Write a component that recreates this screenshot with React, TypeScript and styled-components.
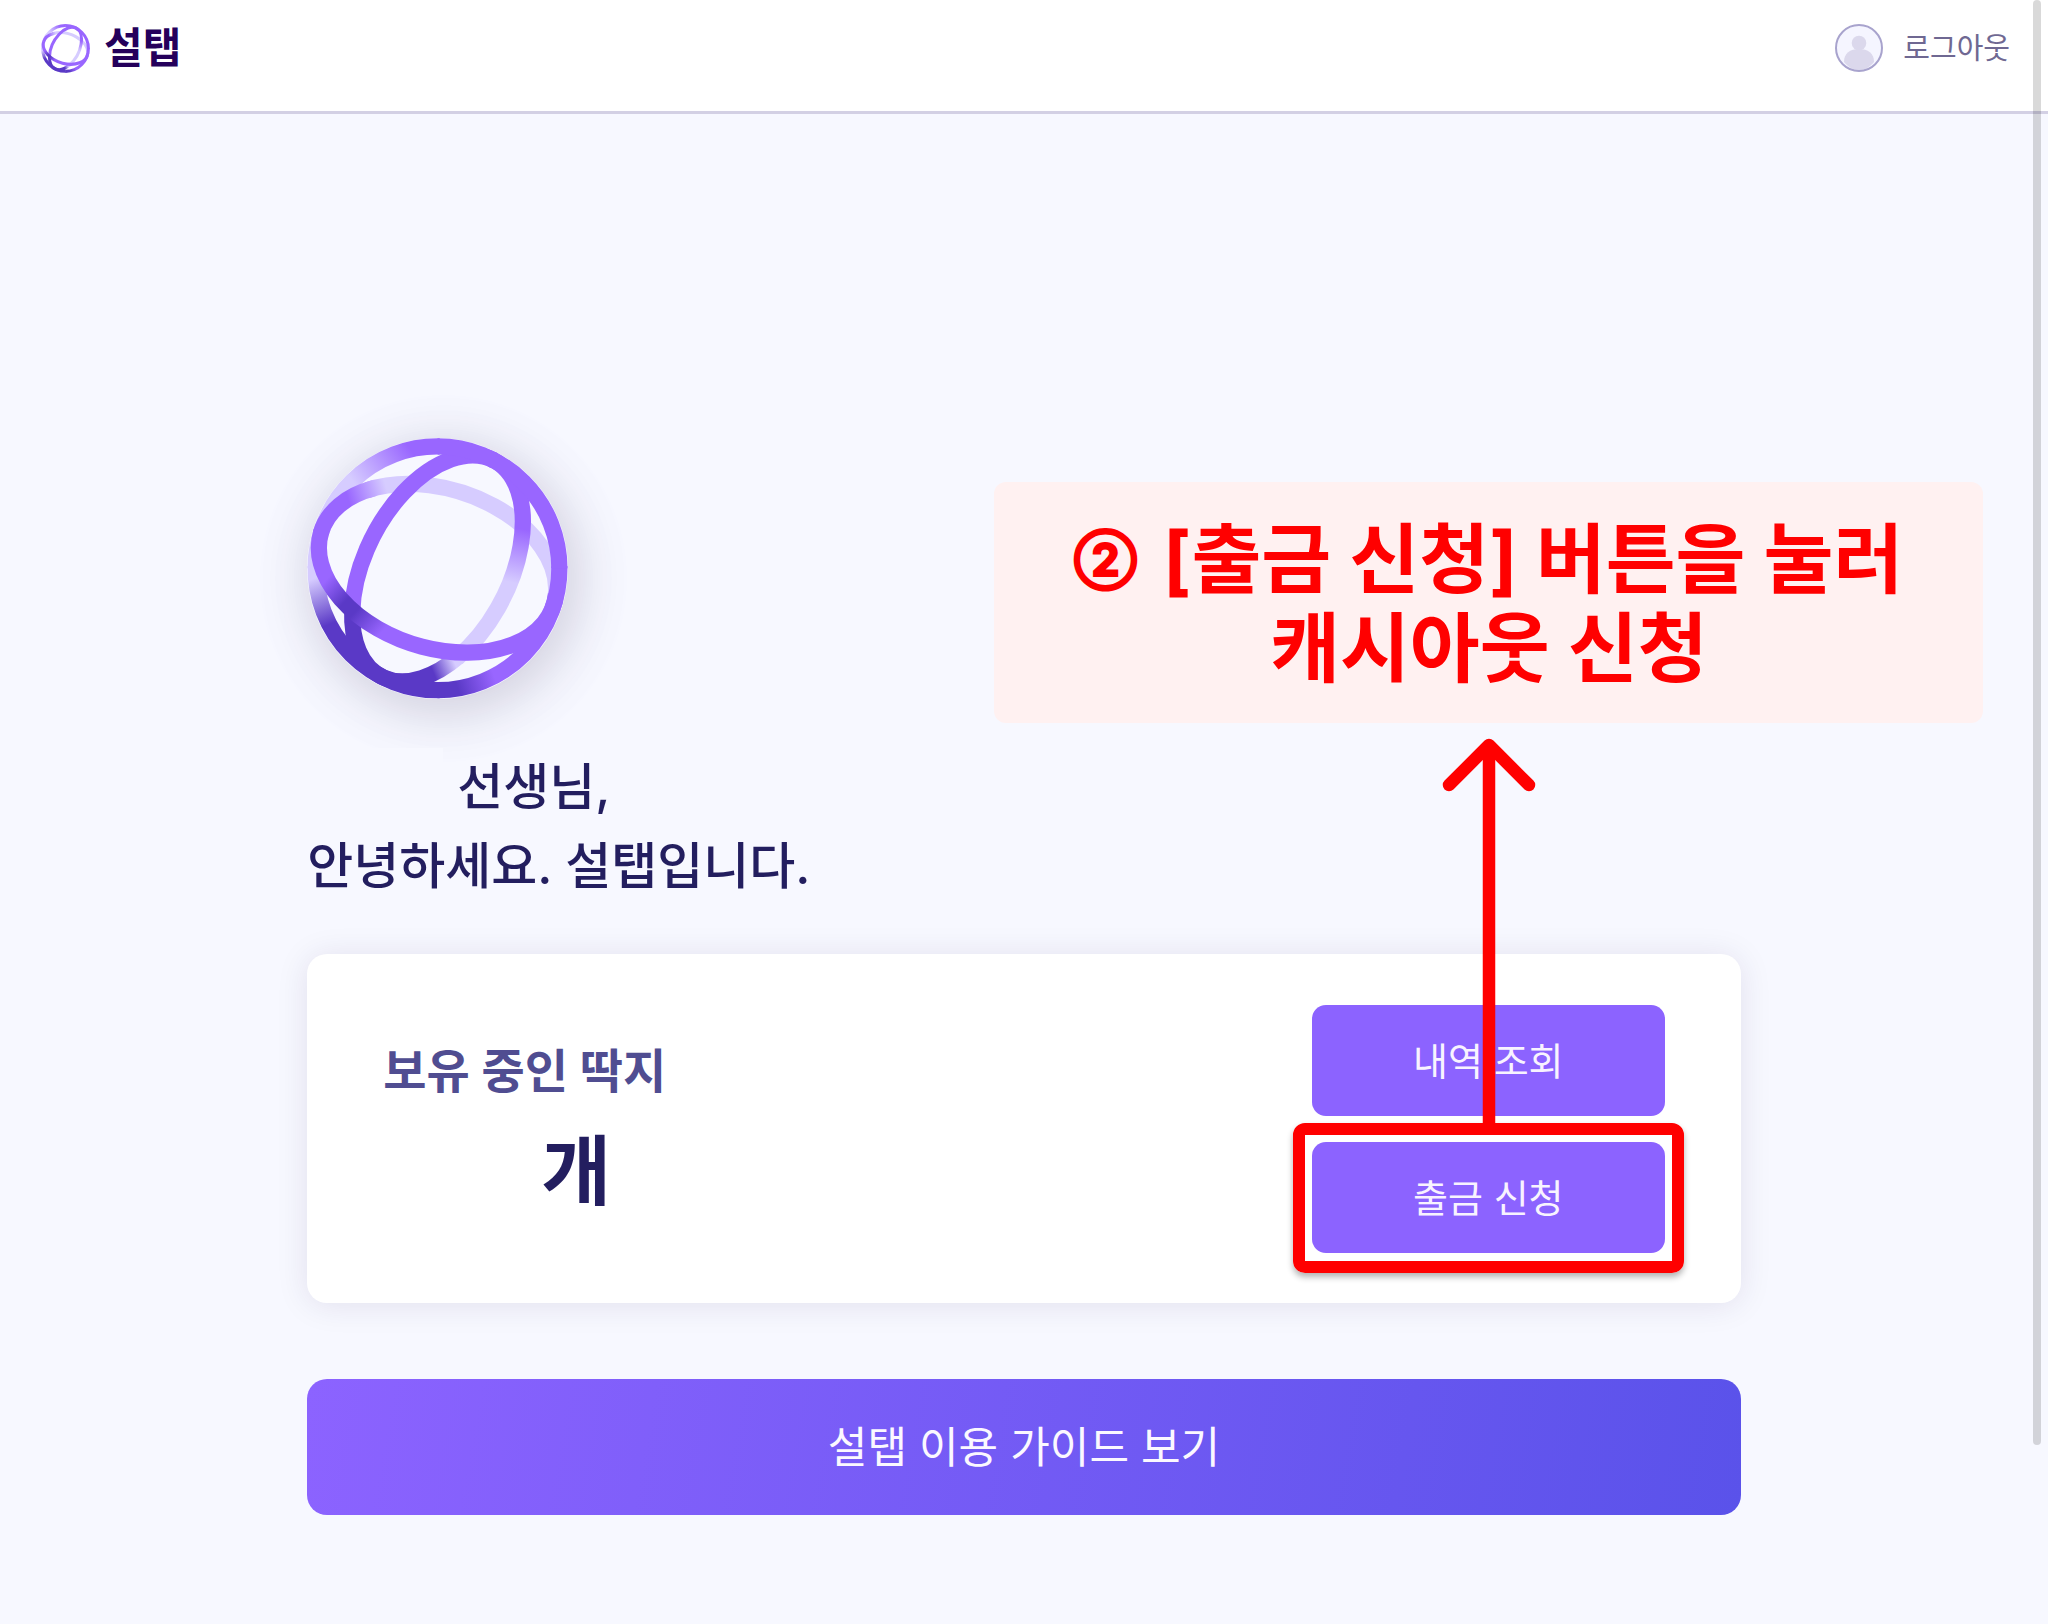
import React, { useId } from "react";
import styled, { createGlobalStyle } from "styled-components";

const color = {
  page: "#f7f8ff",
  ink: "#231e5f",
  brand: "#8c63ff",
  mark: "#ff0000",
};

const GlobalStyle = createGlobalStyle`
  * { box-sizing: border-box; }
  body {
    margin: 0;
    background: ${color.page};
    color: ${color.ink};
    font-family: Inter, "Noto Sans CJK KR", sans-serif;
  }
  button { font-family: inherit; cursor: pointer; }
`;

const Page = styled.div`
  position: relative;
  min-height: 100vh;
  overflow: hidden;
`;

const Header = styled.header`
  display: flex;
  justify-content: space-between;
  align-items: center;
  padding: 16px 38px 31px 41px;
  background: #ffffff;
  border-bottom: 3px solid #d3d0e4;
`;

const Brand = styled.a`
  display: flex;
  align-items: center;
  gap: 14px;
  height: 64px;
  color: #25005b;
  font-size: 42px;
  line-height: 64px;
  font-weight: 700;
  text-decoration: none;
`;

const Account = styled.div`
  display: flex;
  align-items: center;
  gap: 20px;
`;

const LogoutButton = styled.button`
  padding: 2px 0 0;
  border: 0;
  background: none;
  color: #6f6892;
  font-size: 29px;
  line-height: 40px;
`;

const Main = styled.main`
  display: flex;
  flex-direction: column;
  width: 70%;
  margin: 0 auto;
  padding: 324px 0 107px;
`;

const HeroLogo = styled.div`
  width: 261px;
  height: 261px;
  border-radius: 50%;
  box-shadow:
    6px 10px 56px rgba(20, 0, 10, 0.16),
    6px 10px 80px rgba(110, 90, 255, 0.06);
`;

const Greeting = styled.h1`
  display: flex;
  flex-direction: column;
  margin: 49px 0 0;
  font-size: 50px;
  line-height: 79px;
  font-weight: 500;
`;

const NameLine = styled.span`
  display: flex;
  gap: 14px;
`;

const NameMask = styled.span`
  position: relative;
  width: 136px;
  height: 79px;
  background: ${color.page};
`;

const Card = styled.section`
  display: flex;
  justify-content: space-between;
  align-items: center;
  margin-top: 48px;
  padding: 51px 76px 50px;
  border-radius: 20px;
  background: #ffffff;
  box-shadow: 0 2px 32px rgba(40, 20, 80, 0.1);
`;

const Balance = styled.div`
  display: flex;
  flex-direction: column;
  padding-top: 4px;
`;

const BalanceLabel = styled.h2`
  margin: 0;
  color: #504d91;
  font-size: 47px;
  line-height: 70px;
  font-weight: 600;
`;

const BalanceAmount = styled.p`
  margin: 10px 0 0;
  padding-left: 158px;
  font-size: 76px;
  line-height: 110px;
  font-weight: 700;
`;

const Actions = styled.div`
  display: flex;
  flex-direction: column;
  gap: 26px;
  width: 353px;
`;

const ActionButton = styled.button`
  width: 100%;
  height: 111px;
  padding: 0;
  border: 0;
  border-radius: 14px;
  background: ${color.brand};
  color: #f8f3ff;
  font-size: 38px;
  line-height: 56px;
  font-weight: 400;
`;

const GuideButton = styled.button`
  height: 136px;
  margin-top: 76px;
  padding: 0;
  border: 0;
  border-radius: 20px;
  background: linear-gradient(100deg, #8c63ff 0%, #5a52ea 100%);
  color: #fbf8ff;
  font-size: 43px;
  line-height: 64px;
  font-weight: 400;
`;

/* Tutorial marks are anchored to the button they point at. */
const Marked = styled.div`
  position: relative;
`;

const Outline = styled.div`
  position: absolute;
  inset: -19px -19px -20px;
  border: 12px solid ${color.mark};
  border-radius: 12px;
  box-shadow: 0 4px 6px rgba(0, 0, 0, 0.3);
  pointer-events: none;
`;

const Arrow = styled.svg`
  position: absolute;
  left: 50%;
  bottom: 120px;
  width: 96px;
  height: 397px;
  margin-left: -47px;
  pointer-events: none;
`;

const Callout = styled.p`
  position: absolute;
  left: 50%;
  bottom: 530px;
  width: 989px;
  height: 241px;
  margin: 0 0 0 -494px;
  padding: 33px 24px;
  border-radius: 12px;
  background: #fff1f1;
  color: ${color.mark};
  font-size: 76px;
  line-height: 89px;
  font-weight: 700;
  text-align: center;
`;

const StepNumber = styled.span`
  margin-right: 8px;
  font-size: 45px;
  line-height: 20px;
  font-weight: 700;
  vertical-align: 11px;
  -webkit-text-stroke: 2px ${color.mark};
`;

const ScrollThumb = styled.div`
  position: absolute;
  top: 0;
  right: 7px;
  width: 8px;
  height: 89vh;
  border-radius: 4px;
  background: rgba(0, 0, 0, 0.15);
`;

const VIOLET = "#9966ff";
const PALE = "#d6ccff";
const DEEP = "#5a39c6";

/* Arc of a rotated ellipse around the emblem's centre, angles in degrees. */
function arc(rx: number, ry: number, tilt: number, from: number, to: number) {
  const rad = Math.PI / 180;
  const at = (t: number) => {
    const x = rx * Math.cos(t * rad);
    const y = ry * Math.sin(t * rad);
    const c = Math.cos(tilt * rad);
    const s = Math.sin(tilt * rad);
    return `${(592 + x * c - y * s).toFixed(1)} ${(597.5 + x * s + y * c).toFixed(1)}`;
  };
  const large = to - from > 180 ? 1 : 0;
  return `M${at(from)}A${rx} ${ry} ${tilt} ${large} 1 ${at(to)}`;
}

type Stop = [number, string];

function Fade({ id, line, stops }: { id: string; line: number[]; stops: Stop[] }) {
  const [x1, y1, x2, y2] = line;
  return (
    <linearGradient id={id} gradientUnits="userSpaceOnUse" x1={x1} y1={y1} x2={x2} y2={y2}>
      {stops.map(([offset, c]) => (
        <stop key={offset} offset={offset} stopColor={c} />
      ))}
    </linearGradient>
  );
}

function Emblem({ size }: { size: number }) {
  const id = useId().replace(/[^a-zA-Z0-9]/g, "");
  const ref = (name: string) => `url(#${id}${name})`;
  const wide = (a: number, b: number) => arc(367, 240, 17.5, a, b);
  const tall = (a: number, b: number) => arc(217, 367, 27.7, a, b);
  const ring = (a: number, b: number) => arc(367, 367, 0, a, b);
  return (
    <svg width={size} height={size} viewBox="199 205 786 786" fill="none" strokeWidth={49} aria-hidden="true" display="block">
      <defs>
        <Fade id={id + "wideTop"} line={[320, 380, 435, 345]} stops={[[0, VIOLET], [1, PALE]]} />
        <Fade id={id + "wideLow"} line={[250, 620, 450, 810]} stops={[[0.05, VIOLET], [0.36, DEEP], [0.52, DEEP], [0.88, VIOLET]]} />
        <Fade id={id + "tallRight"} line={[850, 480, 815, 640]} stops={[[0, VIOLET], [1, PALE]]} />
        <Fade id={id + "tallLow"} line={[645, 885, 580, 912]} stops={[[0, PALE], [1, DEEP]]} />
        <Fade id={id + "ringTop"} line={[340, 340, 500, 225]} stops={[[0, PALE], [1, VIOLET]]} />
        <Fade id={id + "ringLeft"} line={[215, 630, 270, 765]} stops={[[0, PALE], [1, DEEP]]} />
        <Fade id={id + "ringLow"} line={[655, 965, 765, 930]} stops={[[0, DEEP], [1, VIOLET]]} />
      </defs>
      <path d={wide(222, 352)} stroke={ref("wideTop")} />
      <path d={tall(268, 395)} stroke={ref("tallRight")} />
      <path d={tall(34, 141)} stroke={ref("tallLow")} />
      <path d={tall(140, 270)} stroke={VIOLET} />
      <path d={ring(180, 271)} stroke={ref("ringTop")} />
      <path d={ring(89, 181)} stroke={ref("ringLeft")} />
      <path d={ring(-1, 90)} stroke={ref("ringLow")} />
      <path d={ring(270, 360)} stroke={VIOLET} />
      <path d={wide(179, 226)} stroke={ref("wideTop")} />
      <path d={wide(-8, 180)} stroke={ref("wideLow")} />
    </svg>
  );
}

function Avatar() {
  return (
    <svg width="48" height="48" viewBox="0 0 48 48" aria-hidden="true">
      <circle cx="24" cy="24" r="23" fill="#f5f5ff" />
      <circle cx="24" cy="19" r="7.3" fill="#dbd8ec" />
      <path d="M9 38C9 29 15 25 24 25s15 4 15 13c-4 5-9 8-15 8S13 43 9 38z" fill="#dbd8ec" />
      <circle cx="24" cy="24" r="23" fill="none" stroke="#a8a3cd" strokeWidth="2" />
    </svg>
  );
}

export default function App() {
  return (
    <Page>
      <GlobalStyle />
      <Header>
        <Brand href="#">
          <Emblem size={49} />
          설탭
        </Brand>
        <Account>
          <Avatar />
          <LogoutButton type="button">로그아웃</LogoutButton>
        </Account>
      </Header>
      <Main>
        <HeroLogo>
          <Emblem size={261} />
        </HeroLogo>
        <Greeting>
          <NameLine>
            <NameMask />
            선생님,
          </NameLine>
          <span>안녕하세요. 설탭입니다.</span>
        </Greeting>
        <Card>
          <Balance>
            <BalanceLabel>보유 중인 딱지</BalanceLabel>
            <BalanceAmount>개</BalanceAmount>
          </Balance>
          <Actions>
            <ActionButton type="button">내역 조회</ActionButton>
            <Marked>
              <ActionButton type="button">출금 신청</ActionButton>
              <Outline />
              <Arrow viewBox="0 0 96 397" fill="none" stroke={color.mark} strokeWidth="12.5" aria-hidden="true">
                <path d="M48 397V12" />
                <path d="M8 49L48 9L88 49" strokeLinecap="round" strokeLinejoin="round" />
              </Arrow>
              <Callout>
                <StepNumber>②</StepNumber> [출금 신청] 버튼을 눌러
                <br />
                캐시아웃 신청
              </Callout>
            </Marked>
          </Actions>
        </Card>
        <GuideButton type="button">설탭 이용 가이드 보기</GuideButton>
      </Main>
      <ScrollThumb />
    </Page>
  );
}
